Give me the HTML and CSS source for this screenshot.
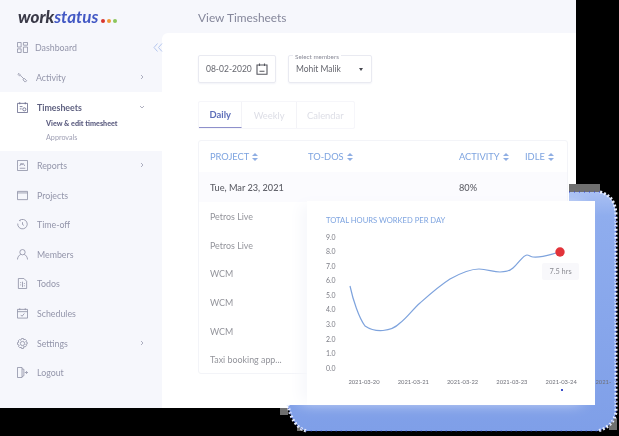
FILE: index.html
```html
<!DOCTYPE html>
<html lang="en">
<head>
<meta charset="utf-8">
<title>View Timesheets</title>
<link rel="stylesheet" href="styles.css">
</head>
<body>
<div class="stage">
  <div class="app">
    <aside class="sidebar">
      <div class="logo"><span class="logo-a">work</span><span class="logo-b">status</span><span class="dots"><i class="dot d1"></i><i class="dot d2"></i><i class="dot d3"></i></span></div>
      <nav class="nav">
        <a class="row"><svg class="ic" viewBox="0 0 12 12"><path d="M.5.5h4v5h-4zM7 .5h4.500v3H7zM7 5.500h4.500v6H7zM.5 7.500h4v4h-4z"/></svg><span class="lbl-a">Dashboard</span><svg class="collapse" viewBox="0 0 10 9"><path d="M4.500.5L1 4.500l3.500 4M9 .5L5.500 4.500 9 8.500"/></svg></a>
        <a class="row"><svg class="ic" viewBox="0 0 12 12"><path d="M2 1.500l2 2-1 1-2-2zM4.500 4.500l3 3M8 7l2.500 2.500-1.500 1.500L6.500 8.500z"/></svg><span class="lbl-b">Activity</span><svg class="chev" viewBox="0 0 6 6"><path d="M2 1l2 2-2 2"/></svg></a>
        <div class="active">
          <a class="row row-main"><svg class="ic ic-dark" viewBox="0 0 12 12"><path d="M.5 1.500h11v10H.5zM3 .2v2.300M9 .2v2.300M3 5h3M3 7.500h2"/><circle cx="8" cy="8" r="1.700"/></svg><span class="lbl-c">Timesheets</span><svg class="chev" viewBox="0 0 6 6"><path d="M1 2l2 2 2-2"/></svg></a>
          <a class="sub sub-on">View &amp; edit timesheet</a>
          <a class="sub">Approvals</a>
        </div>
        <a class="row"><svg class="ic" viewBox="0 0 12 12"><path d="M.5.5h11v11H.5zM3 9h6M3 6.500l1.500-3 1 2 1-2 2 3"/></svg><span class="lbl-c">Reports</span><svg class="chev" viewBox="0 0 6 6"><path d="M2 1l2 2-2 2"/></svg></a>
        <a class="row"><svg class="ic" viewBox="0 0 12 12"><path d="M.5 1.500h11v9H.5zM.5 3.200h11"/></svg><span class="lbl-c">Projects</span></a>
        <a class="row"><svg class="ic" viewBox="0 0 12 12"><path d="M2.500 1.700A5.200 5.200 0 1 1 .8 5M6 .5V1M6 3.500V6l1.500 1M2.500 1.700l1.500.3"/></svg><span class="lbl-c">Time-off</span></a>
        <a class="row"><svg class="ic" viewBox="0 0 12 12"><circle cx="6" cy="3.500" r="2.900"/><path d="M.4 11.500c.4-3 2-5 3.600-5.500M11.600 11.500c-.4-3-2-5-3.600-5.500"/></svg><span class="lbl-c">Members</span></a>
        <a class="row"><svg class="ic" viewBox="0 0 12 12"><path d="M1.500.5h6l3 3v8h-9zM6 4v6M3.500 5h1M3.500 7.500h1M7.500 6h1M7.500 8.500h1"/></svg><span class="lbl-c">Todos</span></a>
        <a class="row"><svg class="ic" viewBox="0 0 12 12"><path d="M.5 1.500h11v9.500H.5zM.5 4h11M3 .3v2M9 .3v2M4 7.500l1.500 1.500 2.500-3"/></svg><span class="lbl-c">Schedules</span></a>
        <a class="row"><svg class="ic" viewBox="0 0 12 12"><circle cx="6" cy="6" r="2.300"/><path d="M5 .5h2l.4 1.500 1.400-.7 1.500 1.500-.7 1.400 1.500.4v2l-1.500.4.7 1.400-1.500 1.500-1.400-.7L7 11.500H5l-.4-1.500-1.400.7-1.500-1.500.7-1.400L.5 7V5l1.500-.4-.7-1.400 1.500-1.500 1.400.7z"/></svg><span class="lbl-c">Settings</span><svg class="chev" viewBox="0 0 6 6"><path d="M2 1l2 2-2 2"/></svg></a>
        <a class="row"><svg class="ic" viewBox="0 0 12 12"><path d="M.5.5h5v11h-5zM5.500 2l2 .5v7l-2 1M8.500 6h3M10 4.500L11.500 6 10 7.500"/></svg><span class="lbl-c">Logout</span></a>
      </nav>
    </aside>
    <main class="main">
      <header class="topbar">View Timesheets</header>
      <section class="panel">
        <div class="filters">
          <div class="field date"><span>08-02-2020</span><svg class="cal" viewBox="0 0 12 12"><path d="M1 2h10v9.300H1zM3.500.5v2.500M8.500.5v2.500M3.500 8.300h5"/></svg></div>
          <div class="field select"><span class="legend">Select members</span><span>Mohit Malik</span><i class="caret"></i></div>
        </div>
        <div class="tabs">
          <span class="tab tab-on">Daily</span>
          <span class="tab">Weekly</span>
          <span class="tab tab-last">Calendar</span>
        </div>
        <div class="table">
          <div class="tr th">
            <span>PROJECT<i class="sort"></i></span>
            <span>TO-DOS<i class="sort"></i></span>
            <span>ACTIVITY<i class="sort"></i></span>
            <span>IDLE<i class="sort"></i></span>
          </div>
          <div class="tr date-row"><span>Tue, Mar 23, 2021</span><span></span><span>80%</span><span></span></div>
          <div class="tr"><span>Petros Live</span></div>
          <div class="tr"><span>Petros Live</span></div>
          <div class="tr"><span>WCM</span></div>
          <div class="tr"><span>WCM</span></div>
          <div class="tr"><span>WCM</span></div>
          <div class="tr"><span>Taxi booking app...</span></div>
        </div>
      </section>
    </main>
  </div>

  <svg class="backdrop" viewBox="0 0 619 436">
    <defs><linearGradient id="g" x1="0" y1="0" x2="0" y2="1"><stop offset="0" stop-color="#a9c0f3"/><stop offset=".1" stop-color="#8fadee"/><stop offset="1" stop-color="#7f9fe8"/></linearGradient></defs>
    <path class="gray" d="M569 184h31v8h-31zM280 408h8v7h-8zM609 418h8v12h-8zM297 426h6v5h-6z"/>
    <path class="blue" fill="url(#g)" d="M569 192H600Q616 196 616 216V412Q614 426 598 431H306Q292 426 288 405H569z"/>
    <path class="edge-w" d="M600 192Q616 196 616 216V412Q614 426 598 431M306 431Q292 426 288 405"/>
    <path class="edge-b" d="M569 192H600M616 216V412Q614 426 598 431H306Q292 426 288 405"/>
  </svg>

  <section class="card">
    <h2 class="card-title">TOTAL HOURS WORKED PER DAY</h2>
    <div class="plot">
      <div class="yaxis"><span>9.0</span><span>8.0</span><span>7.0</span><span>6.0</span><span>5.0</span><span>4.0</span><span>3.0</span><span>2.0</span><span>1.0</span><span>0.0</span></div>
      <svg class="curve" viewBox="0 0 288 197">
        <path d="M43 78C46 92 52 110 58 118C64 122 70 123 76 122.500C82 122 88 120 93 115C100 110 106 101 113 95C122 87 132 78 143 71C152 66 162 61 172 61C180 61 186 64 193 64C198 64 203 63 206 60C212 55 216 47 220 47C222 47 224 49 226 49C236 50 244 46 253 44"/>
        <circle cx="253" cy="44" r="4.700"/>
      </svg>
      <div class="tip">7.5 hrs</div>
      <i class="tick"></i>
    </div>
    <div class="xaxis"><span>2021-03-20</span><span>2021-03-21</span><span>2021-03-22</span><span>2021-03-23</span><span>2021-03-24</span><span class="xcut">2021-</span></div>
  </section>
</div>
</body>
</html>
```

FILE: styles.css
```css
* { box-sizing: border-box; }
html, body { margin: 0; padding: 0; background: #000; }
body { width: 619px; height: 436px; overflow: hidden; font-family: Lato, "Liberation Sans", sans-serif; }
.stage { position: relative; width: 619px; height: 436px; background: #000; overflow: hidden; filter: blur(.4px); }
.app { display: flex; width: 576px; height: 408px; background: #f6f7fc; }

/* sidebar */
.sidebar { width: 162px; flex: none; display: flex; flex-direction: column; }
.logo { height: 33px; padding: 7px 0 0 18px; font-size: 17px; line-height: 20px; font-weight: 900; font-style: italic; white-space: nowrap; }
.logo-a { color: #3a3a48; }
.logo-b { color: #4258c4; font-weight: 700; }
.dots { display: inline-flex; gap: 2px; margin-left: 3px; }
.dot { width: 4px; height: 4px; border-radius: 50%; }
.d1 { background: #d9362e; }
.d2 { background: #ef9a37; }
.d3 { background: #8cc65a; }
.nav { display: flex; flex-direction: column; }
.row { display: flex; align-items: center; height: 29.6px; padding: 0 17px; font-size: 8.800px; color: #9395aa; position: relative; }
.lbl-a { margin-left: 7px; }
.lbl-b { margin-left: 8px; }
.lbl-c { margin-left: 9px; }
.ic { width: 11px; height: 11px; flex: none; fill: none; stroke: #8e90a5; stroke-width: .9; }
.ic-dark { stroke: #66688a; }
.chev { width: 6px; height: 6px; margin-left: auto; fill: none; stroke: #9a9cb0; stroke-width: .8; }
.collapse { position: absolute; left: 153px; top: 10px; width: 10px; height: 9px; fill: none; stroke: #b4c6ee; stroke-width: 1; }
.active { background: #fff; height: 58.500px; padding-top: 5px; display: flex; flex-direction: column; }
.row-main { color: #5f6180; font-weight: 700; height: 20px; flex: none; }
.sub { padding-left: 46px; font-size: 7.200px; line-height: 13.500px; color: #a0a1b5; }
.sub-on { color: #5c5d80; font-weight: 900; }

/* main */
.main { flex: 1; display: flex; flex-direction: column; min-width: 0; }
.topbar { height: 33px; padding: 9px 0 0 36px; font-size: 11.900px; line-height: 17px; color: #85879b; }
.panel { flex: 1; background: #fff; border-top-left-radius: 6px; padding: 22px 8px 0 36px; }
.filters { display: flex; gap: 12px; }
.field { position: relative; display: flex; align-items: center; height: 28px; border: 1px solid #e9eaf1; border-radius: 2px; padding: 0 7px; font-size: 8.500px; color: #66676f; box-shadow: 0 1px 2px #f2f3f8; }
.date { width: 78px; justify-content: space-between; }
.select { width: 84px; }
.cal { width: 12px; height: 12px; fill: none; stroke: #55565e; stroke-width: 1.100; }
.legend { position: absolute; left: 4px; top: -3px; padding: 0 2px; background: #fff; font-size: 6.300px; line-height: 7px; color: #8b8c99; }
.caret { position: absolute; right: 8px; top: 12px; border: 2.500px solid transparent; border-top: 3px solid #45464e; border-bottom: 0; }
.tabs { display: flex; align-items: center; width: 157px; height: 28px; margin-top: 18px; border: 1px solid #f6f6fa; border-radius: 2px; font-size: 9.400px; color: #dddee6; }
.tab { display: flex; align-items: center; justify-content: center; height: 100%; border-right: 1px solid #f3f3f7; width: 55px; }
.tab-on { width: 44px; color: #5d6eb8; font-weight: 700; border-bottom: 1.500px solid #8e90cb; }
.tab-last { width: 58px; border-right: 0; }
.table { width: 370px; height: 234px; margin-top: 11px; border: 1px solid #f3f4f8; border-radius: 3px; }
.tr { display: grid; grid-template-columns: 98px 151px 66px 1fr; align-items: center; height: 28.700px; padding-left: 11px; font-size: 8.900px; color: #93949b; white-space: nowrap; }
.th { height: 31px; color: #7ea4e0; font-size: 9.300px; }
.th span { display: flex; align-items: center; gap: 3px; }
.sort { position: relative; width: 6px; height: 7px; }
.sort::before, .sort::after { content: ""; position: absolute; left: 0; border: 3px solid transparent; }
.sort::before { top: -.500px; border-bottom: 3px solid #8faee3; border-top: 0; }
.sort::after { bottom: -.500px; border-top: 3px solid #8faee3; border-bottom: 0; }
.date-row { background: #fbfbfe; color: #5f6068; height: 30px; font-weight: 500; font-size: 9.200px; }

/* floating chart */
.backdrop { position: absolute; left: 0; top: 0; width: 619px; height: 436px; }
.gray { fill: #6f6f6f; }
.blue { stroke: none; }
.edge-w { fill: none; stroke: #e6ecfc; stroke-width: 3; stroke-dasharray: 2 2; }
.edge-b { fill: none; stroke: #2d3fd2; stroke-width: 1; stroke-dasharray: 1 4; }
.card { position: absolute; left: 307px; top: 201px; width: 288px; height: 204px; background: #fff; box-shadow: -10px 0 14px -4px #f6f7fb; }
.card-title { margin: 0; position: absolute; left: 19px; top: 14px; font-size: 7.600px; line-height: 10px; font-weight: 400; color: #7ea4e0; white-space: nowrap; }
.plot { position: absolute; left: 0; top: 7px; width: 288px; height: 197px; }
.yaxis { position: absolute; left: 19px; top: 21.500px; display: flex; flex-direction: column; font-size: 6.900px; color: #7b7c85; }
.yaxis span { height: 14.600px; line-height: 14.600px; }
.curve { position: absolute; left: 0; top: 0; width: 288px; height: 197px; fill: none; stroke: #7ea3dd; stroke-width: 1.200; overflow: visible; }
.curve circle { fill: #e2333a; stroke: none; }
.tip { position: absolute; left: 235px; top: 55px; width: 37px; height: 17px; background: #f8f8fb; border-radius: 2px; font-size: 7.400px; line-height: 17px; text-align: center; color: #8b8c93; }
.tick { position: absolute; left: 254px; top: 181px; width: 2px; height: 1.500px; background: #3d4fc8; }
.xaxis { position: absolute; left: 37px; top: 176px; display: flex; gap: 9.300px; font-size: 5.800px; line-height: 9px; color: #6f7079; white-space: nowrap; width: 290px; }
.xaxis span { width: 40px; flex: none; text-align: center; }
.xaxis .xcut { text-align: left; margin-left: 5px; width: 20px; }
```
